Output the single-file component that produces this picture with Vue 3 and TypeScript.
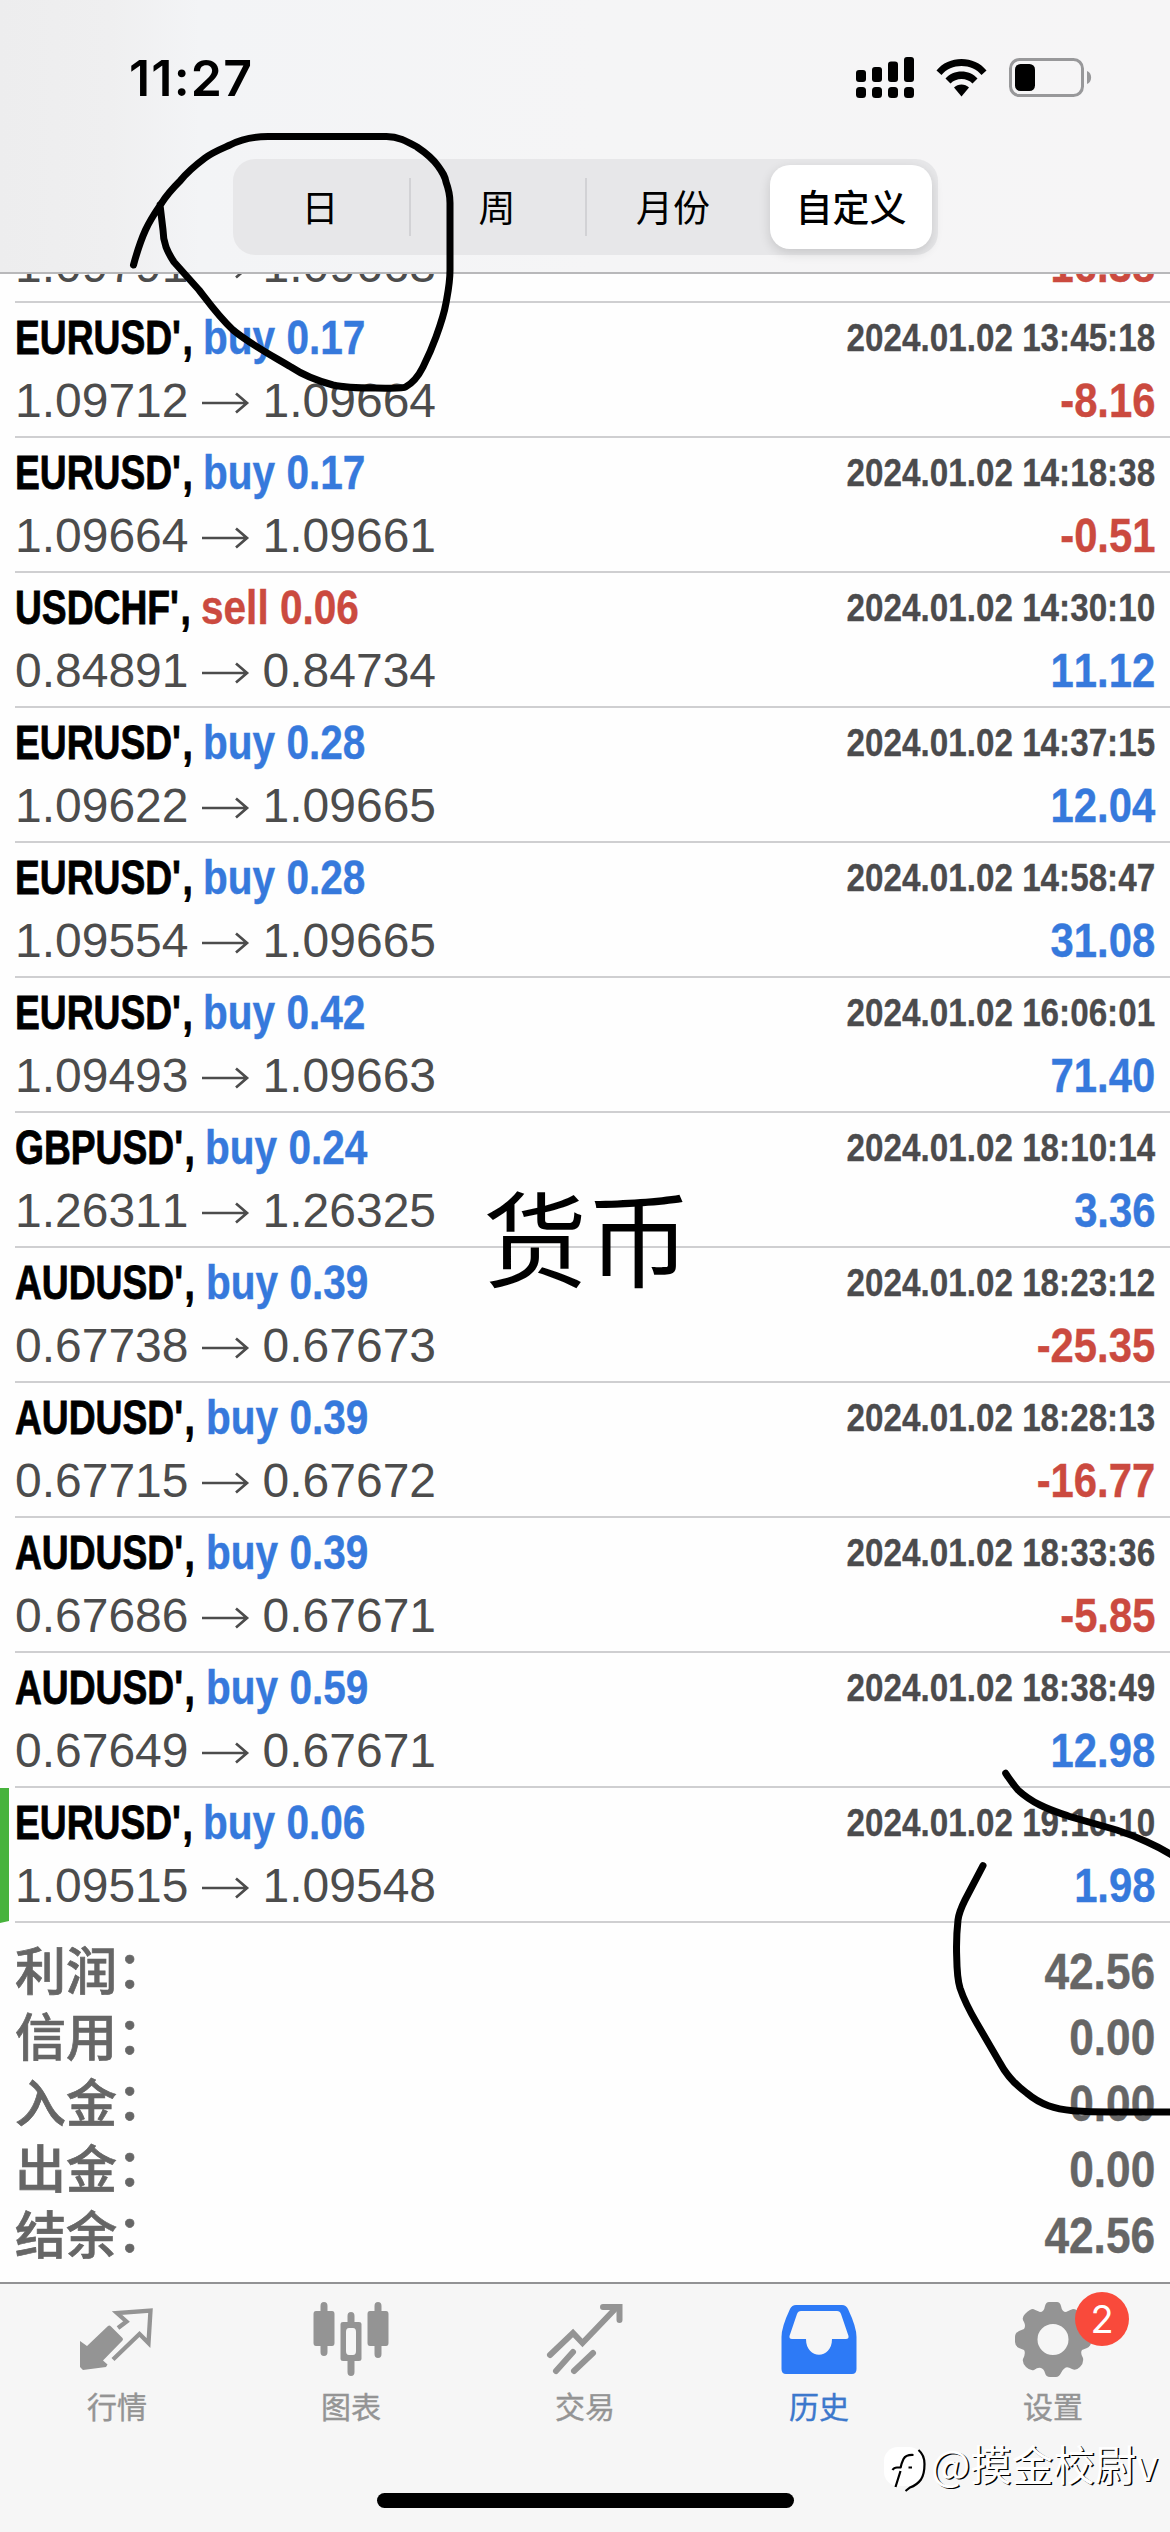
<script setup lang="ts">
type Side = 'buy' | 'sell'
interface Deal {
  symbol: string
  side: Side
  volume: string
  from: string
  to: string
  time: string
  profit: string
  marked?: boolean
}

const periods = ['日', '周', '月份', '自定义']
const activePeriod = 3

// Advance of each condensed symbol name, in pixels
const nameWidth: Record<string, number> = {
  EURUSD: 188,
  USDCHF: 186,
  GBPUSD: 190,
  AUDUSD: 191,
}

const d = (
  symbol: string, side: Side, volume: string, from: string, to: string,
  time: string, profit: string, marked = false,
): Deal => ({ symbol, side, volume, from, to, time: `2024.01.02 ${time}`, profit, marked })

// Deal scrolled halfway under the header: only its price line is in view
const scrolled = { from: '1.09791', to: '1.09663', profit: '-16.38' }

const deals: Deal[] = [
  d('EURUSD', 'buy', '0.17', '1.09712', '1.09664', '13:45:18', '-8.16'),
  d('EURUSD', 'buy', '0.17', '1.09664', '1.09661', '14:18:38', '-0.51'),
  d('USDCHF', 'sell', '0.06', '0.84891', '0.84734', '14:30:10', '11.12'),
  d('EURUSD', 'buy', '0.28', '1.09622', '1.09665', '14:37:15', '12.04'),
  d('EURUSD', 'buy', '0.28', '1.09554', '1.09665', '14:58:47', '31.08'),
  d('EURUSD', 'buy', '0.42', '1.09493', '1.09663', '16:06:01', '71.40'),
  d('GBPUSD', 'buy', '0.24', '1.26311', '1.26325', '18:10:14', '3.36'),
  d('AUDUSD', 'buy', '0.39', '0.67738', '0.67673', '18:23:12', '-25.35'),
  d('AUDUSD', 'buy', '0.39', '0.67715', '0.67672', '18:28:13', '-16.77'),
  d('AUDUSD', 'buy', '0.39', '0.67686', '0.67671', '18:33:36', '-5.85'),
  d('AUDUSD', 'buy', '0.59', '0.67649', '0.67671', '18:38:49', '12.98'),
  d('EURUSD', 'buy', '0.06', '1.09515', '1.09548', '19:10:10', '1.98', true),
]

const totals = [
  { label: '利润', value: '42.56' },
  { label: '信用', value: '0.00' },
  { label: '入金', value: '0.00' },
  { label: '出金', value: '0.00' },
  { label: '结余', value: '42.56' },
]

const tabs = [
  { id: 'quotes', label: '行情' },
  { id: 'chart', label: '图表' },
  { id: 'trade', label: '交易' },
  { id: 'history', label: '历史' },
  { id: 'settings', label: '设置', badge: 2 },
]
</script>

<template>
  <div class="screen">
    <header class="top">
      <div class="status">
        <span class="clock">11:27</span>
        <svg class="indicators" width="240" height="44" viewBox="0 0 240 44">
          <g fill="#000">
            <rect x="0" y="14" width="10" height="12" rx="3" />
            <rect x="16" y="11" width="10" height="15" rx="3" />
            <rect x="32" y="5.500" width="10" height="20.500" rx="3" />
            <rect x="48" y="1" width="10" height="25" rx="3" />
            <rect v-for="i in 4" :key="i" :x="(i - 1) * 16" y="31" width="10" height="11" rx="3.500" />
            <path d="M80.500 14.500C92-1 119-1 130.500 14.500L125.500 19C116 7 95 7 85.500 19Z" />
            <path d="M89.500 22.500C97 13 114 13 121.500 22.500L116.500 27.500C111 21.500 100 21.500 94.500 27.500Z" />
            <path d="M98 31.500C102 27.500 109 27.500 113 31.500L105.500 40.500Z" />
            <rect x="159" y="8" width="20" height="27" rx="5.500" />
          </g>
          <rect x="154.500" y="3.500" width="72" height="36" rx="9" fill="none" stroke="#98989a" stroke-width="3" />
          <path d="M231 15C236.500 17 236.500 26 231 28Z" fill="#98989a" />
        </svg>
      </div>
      <nav class="segments">
        <button
          v-for="(p, i) in periods"
          :key="p"
          class="segment"
          :class="{ active: i === activePeriod, split: i === 1 || i === 2 }"
        >{{ p }}</button>
      </nav>
    </header>

    <main class="content">
      <div class="deal scrolled">
        <div class="line second">
          <span class="price">{{ scrolled.from }}</span>
          <svg class="arrow" width="48" height="24" viewBox="0 0 48 24">
            <path d="M0 12H45M34 2.500L45 12L34 21.500" fill="none" stroke="#4c4c4c" stroke-width="2.700" />
          </svg>
          <span class="price">{{ scrolled.to }}</span>
          <b class="profit sell">{{ scrolled.profit }}</b>
        </div>
      </div>
      <ul class="deals">
        <li v-for="(t, i) in deals" :key="i" class="deal" :class="{ marked: t.marked }">
          <div class="line">
            <span class="name" :style="{ width: nameWidth[t.symbol] + 'px' }"><b>{{ t.symbol }}<i>',</i></b></span>
            <b class="action" :class="t.side">{{ t.side }} {{ t.volume }}</b>
            <b class="time">{{ t.time }}</b>
          </div>
          <div class="line second">
            <span class="price">{{ t.from }}</span>
            <svg class="arrow" width="48" height="24" viewBox="0 0 48 24">
              <path d="M0 12H45M34 2.500L45 12L34 21.500" fill="none" stroke="#4c4c4c" stroke-width="2.700" />
            </svg>
            <span class="price">{{ t.to }}</span>
            <b class="profit" :class="t.profit.startsWith('-') ? 'sell' : 'buy'">{{ t.profit }}</b>
          </div>
        </li>
      </ul>
      <dl class="totals">
        <div v-for="t in totals" :key="t.label" class="total">
          <dt>{{ t.label }}<span class="colon">：</span></dt>
          <dd>{{ t.value }}</dd>
        </div>
      </dl>
    </main>

    <footer class="tabbar">
      <div class="tabs">
        <a v-for="tab in tabs" :key="tab.id" class="tab" :class="{ current: tab.id === 'history' }">
          <svg width="80" height="80" viewBox="0 0 80 80" fill="currentColor">
            <template v-if="tab.id === 'quotes'">
              <path d="M3 41L10 46L31 26Q32.500 25 34 26.500L45.500 38Q46.500 39 45.500 40.500L26 60.500L30.500 64.500L29 67L6 70L3 67Z" />
              <path d="M41 28L49.500 21.500L40 13L73.500 10.500L71.500 43L62.500 34L36 59.500" fill="none" stroke="currentColor" stroke-width="4.300" />
            </template>
            <template v-else-if="tab.id === 'chart'">
              <path d="M9.500 6Q9.500 2 13 2T16.500 6V11H21Q23.500 11 23.500 14V43Q23.500 46 21 46H16.500V52Q16.500 56 13 56T9.500 52V46H5Q2.500 46 2.500 43V14Q2.500 11 5 11H9.500Z" />
              <path d="M63.500 6Q63.500 2 67 2T70.500 6V11H75Q77.500 11 77.500 14V43Q77.500 46 75 46H70.500V54Q70.500 58 67 58T63.500 54V46H59Q56.500 46 56.500 43V14Q56.500 11 59 11H63.500Z" />
              <path fill-rule="evenodd" d="M36.500 16Q36.500 12 40 12T43.500 16V22H48Q50.500 22 50.500 24V59Q50.500 61 48 61H43.500V72Q43.500 76 40 76T36.500 72V61H32Q29.500 61 29.500 59V24Q29.500 22 32 22H36.500ZM38 28Q35 28 35 32V51Q35 55 38 55H42Q45 55 45 51V32Q45 28 42 28Z" />
            </template>
            <g v-else-if="tab.id === 'trade'" fill="none" stroke="currentColor" stroke-width="6" stroke-linecap="round" stroke-linejoin="miter">
              <path d="M5 55L28 33L37.500 43L71 8" />
              <path d="M58 7H74.500V20" />
              <path d="M11 71L28 52M29 71L48 53" />
            </g>
            <path
              v-else-if="tab.id === 'history'"
              fill-rule="evenodd"
              d="M17 5H63Q67 5 69 9Q77.500 27 77.500 37V69Q77.500 74 73 74H7Q2.500 74 2.500 69V37Q2.500 27 11 9Q13 5 17 5ZM22 11Q19 11 18 14L10.500 36Q10 39 13 39H27C27 60 53 60 53 39H67Q70 39 69.500 36L62 14Q61 11 58 11Z"
            />
            <path
              v-else
              fill-rule="evenodd"
              d="M36 2H44Q47 2 48 6Q49 12 53 12Q57 10 60 9Q64 9 68 14Q71 18 69 22Q67 27 69 29L74 31Q78 33 78 37V42Q78 46 74 48L69 50Q67 53 70 58Q71 63 67 67Q63 71 59 69Q54 66 52 68Q49 70 48 73Q46 77 43 77H37Q33 77 32 73Q31 69 28 68Q25 67 21 70Q17 71 13 67Q9 63 10 59Q13 53 11 50L6 48Q2 46 2 42V37Q2 33 6 31L11 29Q13 26 11 22Q8 18 12 14Q17 9 20 9L27 12Q31 12 32 6Q33 2 36 2ZM40 24A15.500 15.500 0 1 0 40 55A15.500 15.500 0 1 0 40 24Z"
            />
          </svg>
          <span class="caption">{{ tab.label }}</span>
          <span v-if="tab.badge" class="badge">{{ tab.badge }}</span>
        </a>
      </div>
      <div class="home"></div>
    </footer>

    <span class="note">货币</span>
    <span class="watermark">
      <svg width="44" height="56" viewBox="0 0 44 56">
        <rect x="0" y="7" width="39" height="39" rx="14" fill="#fff" />
        <path d="M34.500 10Q40.500 15 40.500 24Q40.500 34 37 39.500Q33 45 26 47.500L21.500 51M29.500 15Q22 14.500 19.500 19Q17.500 23 16.500 28M8.500 30Q10 27.500 13 27.500H17M16.500 31L11.500 47M24.500 27.500H28" fill="none" stroke="#000" stroke-width="2.200" />
      </svg>
      <span>@摸金校尉v</span>
    </span>
    <svg class="ink" width="1170" height="2532" viewBox="0 0 1170 2532">
      <path d="M133.500 265C137 252 141 240 145.500 230C151 218 157 210 162 202.500C168 193 174 187 180 181C188 171 197 164 205 158C213 152 221 149 230 145C243 138 255 136.500 268 136.500H386.500C399 136.500 408 142 417 147C426 153 433 159 438 166C443 173 445 176 446 182C449 190 450 196 450 203V270C450 283 448 292 446 303C444 315 440 326 436 337C432 348 428 357 423 367C418 377 411 384 405.500 387C402 389 388 388 375 388C360 388 346 388 333 385C318 381 303 375 291 367C269 354 250 344 233 330C219 317 209 303 199 290L174 262C170 256 168 252 166 247C164 241 163 236 163 230L160 205" />
      <path d="M1005.700 1773.300Q1012 1783 1018 1790Q1028 1799 1040 1805C1052 1811 1060 1813 1070 1816.700L1116.700 1830Q1132 1835 1146.700 1841.700Q1161 1848 1175 1857" />
      <path d="M983 1865.700L965 1900Q959 1912 958 1920Q956 1938 956.700 1956.700Q957 1978 960 1988Q965 2003 976.700 2023L1000 2063C1007 2076 1017 2086 1026.700 2093C1041 2105 1055 2109 1073 2110.700Q1090 2112 1110 2112H1176" />
    </svg>
  </div>
</template>

<style>
body {
  margin: 0;
  background: #fff;
}
</style>

<style scoped>
.screen {
  position: relative;
  display: flex;
  flex-direction: column;
  width: 1170px;
  height: 2532px;
  overflow: hidden;
  background: #fefefe;
  font-family: "Liberation Sans", "Noto Sans CJK SC", sans-serif;
  font-kerning: none;
  color: #000;
}
.top {
  box-sizing: border-box;
  flex: none;
  height: 274px;
  border-bottom: 2px solid #b8b8ba;
  background: linear-gradient(90deg, #ededee 0, #efeff0 110px, #f3f4f6 200px, #f5f5f6 600px, #f6f5f6 1170px);
}
.status {
  display: flex;
  justify-content: space-between;
  align-items: flex-start;
  height: 103px;
  padding: 56px 74px 0 129px;
}
.clock {
  font: 600 50px/44px Inter, sans-serif;
  letter-spacing: 1.2px;
}
.segments {
  box-sizing: border-box;
  display: flex;
  align-items: center;
  width: 705px;
  height: 96px;
  margin-left: 233px;
  padding-right: 6px;
  border-radius: 22px;
  background: #e7e7e9;
}
.segment {
  box-sizing: border-box;
  flex: 0 0 176px;
  height: 58px;
  padding: 0 2px 3px 0;
  border: 0;
  background: none;
  font: 400 37px/52px "Noto Sans CJK SC", sans-serif;
  color: #000;
}
.segment.split {
  border-left: 2px solid #d2d2d5;
}
.segment.active {
  flex: 0 0 162px;
  height: 84px;
  margin-left: 9px;
  padding-right: 0;
  border-radius: 20px;
  background: #fff;
  box-shadow: 0 4px 12px rgba(0, 0, 0, 0.14);
  font-weight: 500;
}
.content {
  flex: none;
  height: 2008px;
  overflow: hidden;
}
.deals {
  margin: 0;
  padding: 0;
  list-style: none;
}
.deal {
  box-sizing: border-box;
  height: 135px;
  padding: 3px 15px 0;
  border-bottom: 2px solid transparent;
  background: linear-gradient(#cfcfd1, #cfcfd1) 15px 100% / 1155px 2px no-repeat;
  background-origin: border-box;
  background-clip: border-box;
}
.deal.scrolled {
  height: 69px;
  margin-top: -40px;
  padding-top: 0;
}
.deal.marked {
  padding-left: 6px;
  border-left: 9px solid #47b33c;
}
.line {
  display: flex;
  align-items: center;
  height: 63px;
  font-size: 48px;
  line-height: 63px;
  white-space: nowrap;
}
.name b {
  display: inline-block;
  transform: scaleX(0.775);
  transform-origin: 0 50%;
  -webkit-text-stroke: 0.8px;
}
.name i {
  font-style: normal;
  letter-spacing: 2px;
}
.action {
  transform: scaleX(0.845);
  transform-origin: 0 50%;
  -webkit-text-stroke: 0.4px;
}
.time {
  margin-left: auto;
  padding-bottom: 1px;
  font-size: 39px;
  color: #4b4b4d;
  transform: scaleX(0.852);
  transform-origin: 100% 50%;
  -webkit-text-stroke: 0.3px;
}
.price {
  color: #4c4c4c;
}
.arrow {
  margin: 4px 13px 0;
}
.profit {
  margin-left: auto;
  transform: scaleX(0.87);
  transform-origin: 100% 50%;
  -webkit-text-stroke: 0.4px;
}
.buy {
  color: #3679dc;
}
.sell {
  color: #cb4a3f;
}
.totals {
  margin: 0;
  padding: 16px 15px 0;
  color: #666;
}
.total {
  display: flex;
  justify-content: space-between;
  height: 66px;
  line-height: 66px;
}
dt {
  margin-top: -4px;
  font: 500 51px/66px "Noto Sans CJK SC", sans-serif;
  -webkit-text-stroke: 0.7px;
}
.colon {
  position: relative;
  top: -2px;
}
dd {
  margin: 0;
  font-size: 50px;
  font-weight: 700;
  transform: scaleX(0.885);
  transform-origin: 100% 50%;
  -webkit-text-stroke: 0.4px;
}
.tabbar {
  box-sizing: border-box;
  flex: 1;
  display: flex;
  flex-direction: column;
  align-items: center;
  border-top: 2px solid #929294;
  background: #f6f6f6;
}
.tabs {
  display: flex;
  align-self: stretch;
  height: 209px;
}
.tab {
  position: relative;
  flex: 1;
  display: flex;
  flex-direction: column;
  align-items: center;
  padding-top: 16px;
  color: #949494;
}
.tab svg {
  flex: none;
}
.caption {
  margin-top: 3px;
  font: 400 30px/44px "Noto Sans CJK SC", sans-serif;
  -webkit-text-stroke: 0.4px;
}
.current {
  color: #2d7af6;
}
.current .caption {
  color: #3c78cc;
}
.badge {
  position: absolute;
  top: 8px;
  left: 139px;
  width: 54px;
  height: 54px;
  border-radius: 50%;
  background: #f94a3b;
  color: #fff;
  font: 400 38px/54px Inter, sans-serif;
  text-align: center;
}
.home {
  width: 417px;
  height: 15px;
  border-radius: 8px;
  background: #000;
}
.note {
  position: absolute;
  left: 483px;
  top: 1160px;
  font: 400 104px/150px "Noto Sans CJK SC", sans-serif;
}
.watermark {
  position: absolute;
  left: 884px;
  top: 2440px;
  display: flex;
  gap: 3px;
  font: 400 41.5px/46px "Noto Sans CJK SC", sans-serif;
  color: #fff;
  text-shadow: 1.5px 1px 0 #000;
  white-space: nowrap;
}
.ink {
  position: absolute;
  left: 0;
  top: 0;
  fill: none;
  stroke: #000;
  stroke-width: 7px;
  stroke-linecap: round;
  stroke-linejoin: round;
}
</style>
